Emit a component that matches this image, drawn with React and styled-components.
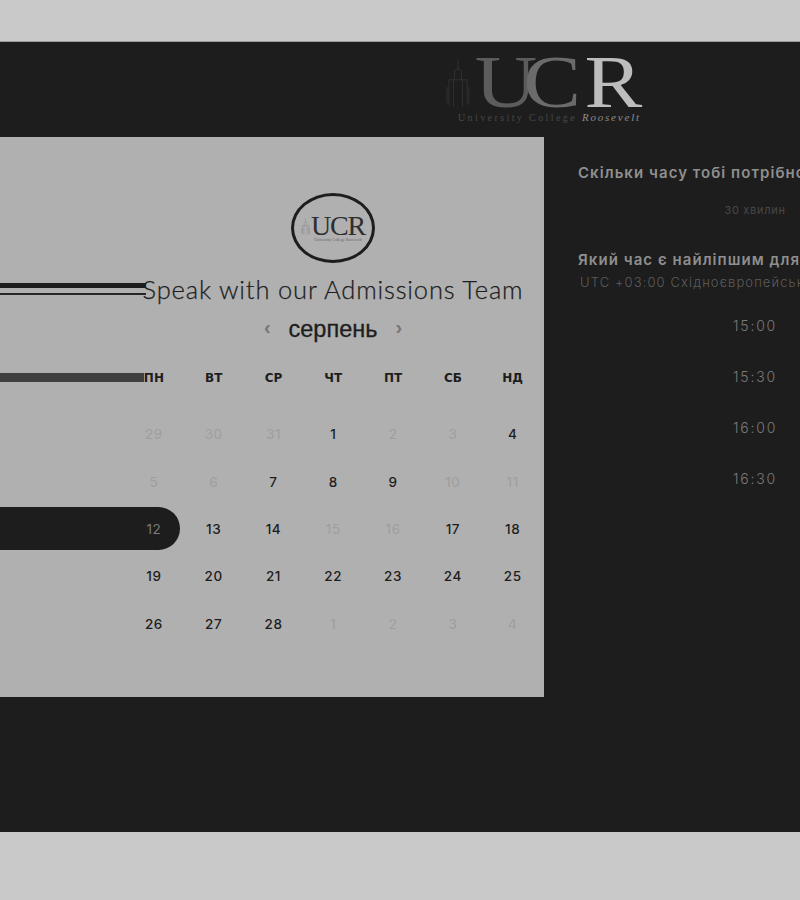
import React from 'react'
import styled, { createGlobalStyle } from 'styled-components'

const GlobalStyle = createGlobalStyle`
  html, body { margin: 0; padding: 0; background: #c9c9c9; }
  body { font-family: Inter, "Liberation Sans", sans-serif; overflow: hidden; }
`

const WEEK = ['ПН', 'ВТ', 'СР', 'ЧТ', 'ПТ', 'СБ', 'НД']
const DAYS = [
  [29, 1], [30, 1], [31, 1], [1], [2, 1], [3, 1], [4],
  [5, 1], [6, 1], [7], [8], [9], [10, 1], [11, 1],
  [12, 0, 1], [13], [14], [15, 1], [16, 1], [17], [18],
  [19], [20], [21], [22], [23], [24], [25],
  [26], [27], [28], [1, 1], [2, 1], [3, 1], [4, 1],
]
const TIMES = ['15:00', '15:30', '16:00', '16:30']

const Tower = ({ color, width, height }) => (
  <svg width={width} height={height} viewBox="0 0 26 64" fill="none" stroke={color} strokeWidth="1">
    <path d="M13 1v12M9 14l4-2 4 2v10M9 14v10M3 24h20M3 24v28M23 24v28M8 24v30M18 24v30M1 32v18M25 32v18" />
  </svg>
)

const App = () => (
  <Page>
    <GlobalStyle />
    <Band>
      <TopBar>
        <Logo>
          <LogoTower><Tower color="#333" width={24} height={58} /></LogoTower>
          <LogoCol>
            <LogoLetters>
              <span>U</span><span>C</span><span>R</span>
            </LogoLetters>
            <LogoLine>University College <b>Roosevelt</b></LogoLine>
          </LogoCol>
        </Logo>
      </TopBar>
      <Main>
        <Card>
          <Badge>
            <Tower color="#777" width={9} height={20} />
            <BadgeCol>
              <BadgeLetters>UCR</BadgeLetters>
              <BadgeLine>University College Roosevelt</BadgeLine>
            </BadgeCol>
          </Badge>
          <Heading>Speak with our Admissions Team</Heading>
          <MonthRow>
            <Arrow>‹</Arrow>
            <Month>серпень</Month>
            <Arrow>›</Arrow>
          </MonthRow>
          <Calendar>
            <WeekBar />
            <WeekRow>
              {WEEK.map((d) => <WeekDay key={d}>{d}</WeekDay>)}
            </WeekRow>
            <DayGrid>
              {DAYS.map(([n, muted, selected], i) => (
                <Day key={i} $muted={muted} $selected={selected}>
                  {selected ? <Pill /> : null}
                  <DayNum>{n}</DayNum>
                </Day>
              ))}
            </DayGrid>
          </Calendar>
        </Card>
        <Side>
          <SideTitle>Скільки часу тобі потрібно?</SideTitle>
          <Duration>30 хвилин</Duration>
          <SideTitle>Який час є найліпшим для тебе?</SideTitle>
          <Zone>UTC +03:00 Східноєвропейський час</Zone>
          <Times>
            {TIMES.map((t) => <Time key={t}>{t}</Time>)}
          </Times>
        </Side>
      </Main>
    </Band>
  </Page>
)

export default App

const Page = styled.div`
  width: 800px;
  height: 900px;
  padding-top: 41px;
  box-sizing: border-box;
  overflow: hidden;
`
const Band = styled.div`
  height: 791px;
  background: #1d1d1d;
  border-top: 1px solid #9c9c9c;
  box-sizing: border-box;
`
const TopBar = styled.div`
  height: 95px;
  padding: 12px 0 0 446px;
  box-sizing: border-box;
`
const Logo = styled.div`
  display: flex;
  align-items: flex-start;
`
const LogoTower = styled.div`
  flex: 0 0 12px;
  margin-top: 4px;
`
const LogoCol = styled.div`
  display: flex;
  flex-direction: column;
`
const LogoLetters = styled.div`
  font-family: "Liberation Serif", serif;
  font-size: 74px;
  line-height: 56px;
  height: 56px;
  padding-left: 4px;
  transform: scaleX(1.17);
  transform-origin: left center;
  white-space: nowrap;
  span:nth-child(1) { color: #5c5c5c; }
  span:nth-child(2) { color: #6b6b6b; margin-left: -12px; }
  span:nth-child(3) { color: #bdbdbd; margin-left: 3px; }
`
const LogoLine = styled.div`
  font-family: "Liberation Serif", serif;
  font-size: 10px;
  line-height: 12px;
  letter-spacing: 2.4px;
  color: #484848;
  white-space: nowrap;
  margin: 1px 0 0 -12px;
  b {
    font-size: 11px;
    font-weight: 400;
    font-style: italic;
    color: #8c8c8c;
    letter-spacing: 1.8px;
  }
`
const Main = styled.div`
  display: flex;
  align-items: flex-start;
`
const Card = styled.div`
  flex: 0 0 544px;
  height: 560px;
  background: #b0b0b0;
  padding: 56px 1px 0 123px;
  box-sizing: border-box;
  display: flex;
  flex-direction: column;
  align-items: center;
`
const Badge = styled.div`
  width: 84px;
  height: 70px;
  border: 3px solid #1d1d1d;
  border-radius: 50%;
  box-sizing: border-box;
  display: flex;
  align-items: center;
  justify-content: center;
  gap: 1px;
`
const BadgeCol = styled.div`
  display: flex;
  flex-direction: column;
  align-items: center;
`
const BadgeLetters = styled.div`
  font-family: "Liberation Serif", serif;
  font-size: 28px;
  line-height: 23px;
  letter-spacing: -1.2px;
  color: #2e2e2e;
`
const BadgeLine = styled.div`
  font-family: "Liberation Serif", serif;
  font-size: 4px;
  line-height: 5px;
  color: #666;
  white-space: nowrap;
`
const Heading = styled.h1`
  position: relative;
  margin: 12px 0 0;
  height: 30px;
  font-family: Lato, sans-serif;
  font-weight: 300;
  font-size: 25.5px;
  line-height: 28px;
  letter-spacing: 0.82px;
  -webkit-text-stroke: 0.25px #1d1d1d;
  color: #1d1d1d;
  white-space: nowrap;
  &::before {
    content: '';
    position: absolute;
    right: calc(100% - 3px);
    top: 8px;
    width: 160px;
    height: 5px;
    background: #1d1d1d;
  }
  &::after {
    content: '';
    position: absolute;
    right: calc(100% - 3px);
    top: 18px;
    width: 160px;
    height: 2px;
    background: #262626;
  }
`
const MonthRow = styled.div`
  margin-top: 9px;
  height: 30px;
  display: flex;
  align-items: center;
  gap: 18px;
`
const Month = styled.div`
  font-family: "Liberation Sans", sans-serif;
  font-size: 23.5px;
  -webkit-text-stroke: 0.3px #1d1d1d;
  color: #1d1d1d;
`
const Arrow = styled.div`
  font-family: "Liberation Sans", sans-serif;
  font-size: 20px;
  font-weight: 700;
  line-height: 20px;
  color: #777;
  margin-top: -4px;
`
const Calendar = styled.div`
  position: relative;
  align-self: stretch;
  margin: 24px 0 0 1px;
`
const WeekBar = styled.div`
  position: absolute;
  right: calc(100% - 20px);
  top: 5px;
  width: 160px;
  height: 9px;
  background: #404040;
`
const WeekRow = styled.div`
  display: grid;
  grid-template-columns: repeat(7, 59.8px);
  height: 20px;
  align-items: center;
`
const WeekDay = styled.div`
  position: relative;
  text-align: center;
  font-family: "DejaVu Sans", sans-serif;
  font-size: 12px;
  font-weight: 700;
  color: #1d1d1d;
`
const DayGrid = styled.div`
  margin-top: 22.5px;
  display: grid;
  grid-template-columns: repeat(7, 59.8px);
  grid-auto-rows: 47.4px;
`
const Day = styled.div`
  position: relative;
  display: flex;
  align-items: center;
  justify-content: center;
  font-size: 13.5px;
  font-weight: ${(p) => (p.$muted || p.$selected ? 400 : 500)};
  letter-spacing: 0.6px;
  color: ${(p) => (p.$selected ? '#7c7c7c' : p.$muted ? '#9e9e9e' : '#1d1d1d')};
`
const DayNum = styled.span`
  position: relative;
`
const Pill = styled.div`
  position: absolute;
  right: 4px;
  top: 2px;
  width: 200px;
  height: 43px;
  background: #1d1d1d;
  border-radius: 0 22px 22px 0;
`
const Side = styled.div`
  flex: 0 0 354px;
  margin-left: 34px;
  padding-top: 27px;
  box-sizing: border-box;
  white-space: nowrap;
`
const SideTitle = styled.div`
  font-size: 15px;
  line-height: 18px;
  font-weight: 600;
  letter-spacing: 1.05px;
  color: #8f8f8f;
`
const Duration = styled.div`
  margin: 18px 0 31px;
  height: 20px;
  line-height: 20px;
  text-align: center;
  font-size: 11px;
  letter-spacing: 0.7px;
  color: #484848;
`
const Zone = styled.div`
  margin: 4px 0 0 2px;
  font-size: 13px;
  font-weight: 300;
  line-height: 18px;
  letter-spacing: 1.1px;
  color: #5c5c5c;
`
const Times = styled.div`
  margin-top: 9px;
  display: flex;
  flex-direction: column;
`
const Time = styled.div`
  height: 51px;
  line-height: 51px;
  text-align: center;
  font-size: 14px;
  font-weight: 300;
  letter-spacing: 1.8px;
  color: #7a7a7a;
`
